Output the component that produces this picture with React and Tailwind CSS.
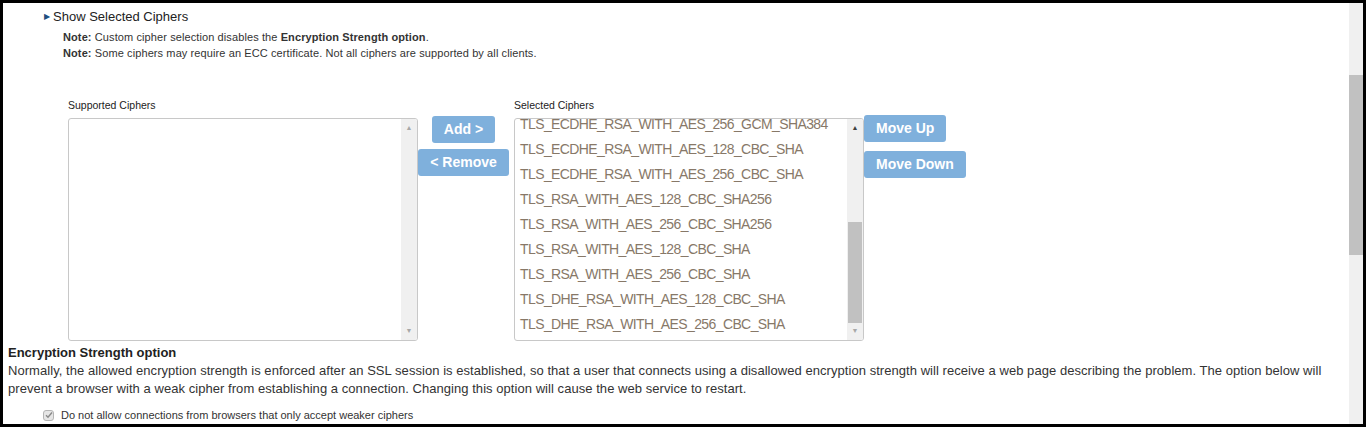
import { useState } from "react";

const selected = [
  "TLS_ECDHE_RSA_WITH_AES_256_GCM_SHA384",
  "TLS_ECDHE_RSA_WITH_AES_128_CBC_SHA",
  "TLS_ECDHE_RSA_WITH_AES_256_CBC_SHA",
  "TLS_RSA_WITH_AES_128_CBC_SHA256",
  "TLS_RSA_WITH_AES_256_CBC_SHA256",
  "TLS_RSA_WITH_AES_128_CBC_SHA",
  "TLS_RSA_WITH_AES_256_CBC_SHA",
  "TLS_DHE_RSA_WITH_AES_128_CBC_SHA",
  "TLS_DHE_RSA_WITH_AES_256_CBC_SHA",
];

function ListScrollbar({ thumb, upDark }) {
  return (
    <div className="w-[16px] bg-[#f0f0f0] flex flex-col items-center justify-between py-[5px] relative">
      <span className={`text-[7px] leading-[8px] ${upDark ? "text-[#404040]" : "text-[#a8a8a8]"}`}>▲</span>
      {thumb && (
        <div className="absolute left-[1px] right-[1px] top-[103px] h-[101px] bg-[#c1c1c1]" />
      )}
      <span className="text-[7px] leading-[8px] text-[#a8a8a8]">▼</span>
    </div>
  );
}

function Btn({ children }) {
  return (
    <button className="bg-[#7fb0dc] text-white text-[14px] font-bold leading-[27px] h-[27px] px-[12px] rounded-[3px] whitespace-nowrap">
      {children}
    </button>
  );
}

export default function App() {
  const [strict, setStrict] = useState(true);

  return (
    <div
      className="w-[1366px] h-[427px] border-[3px] border-black flex bg-white text-[#333] overflow-hidden"
      style={{ fontFamily: '"Liberation Sans", Arial, sans-serif' }}
    >
      <div className="flex-1 flex flex-col overflow-hidden">
        {/* Show Selected Ciphers */}
        <div className="flex items-center pl-[41px] pt-[6px] h-[22px] text-[13px] text-[#222]">
          <span className="text-[#1f4f7f] text-[8px] mr-[3px]">▶</span>
          Show Selected Ciphers
        </div>

        {/* Notes */}
        <div className="pl-[60px] mt-[4px] text-[11px] leading-[16px] tracking-[0.1px] text-[#333]">
          <div>
            <b>Note:</b> Custom cipher selection disables the <b>Encryption Strength option</b>.
          </div>
          <div>
            <b>Note:</b> Some ciphers may require an ECC certificate. Not all ciphers are supported by all clients.
          </div>
        </div>

        {/* Cipher lists */}
        <div className="flex items-start pl-[65px] mt-[37px]">
          <div className="flex flex-col">
            <div className="text-[10.5px] leading-[14px] h-[14px] text-[#222]">Supported Ciphers</div>
            <div className="mt-[6px] w-[350px] h-[223px] border border-[#c8c8c8] rounded-[3px] flex justify-end overflow-hidden">
              <ListScrollbar />
            </div>
          </div>

          <div className="w-[91px] mt-[18px] flex flex-col items-center gap-[6px]">
            <Btn>Add &gt;</Btn>
            <Btn>&lt; Remove</Btn>
          </div>

          <div className="flex flex-col ml-[5px]">
            <div className="text-[10.5px] leading-[14px] h-[14px] text-[#222]">Selected Ciphers</div>
            <div className="mt-[6px] w-[350px] h-[223px] border border-[#c8c8c8] rounded-[3px] flex overflow-hidden">
              <div className="flex-1 overflow-hidden">
                <div className="-mt-[7px] pl-[5px]">
                  {selected.map((c) => (
                    <div
                      key={c}
                      className="h-[25px] leading-[25px] text-[14px] tracking-[-0.6px] text-[#877868] whitespace-nowrap"
                    >
                      {c}
                    </div>
                  ))}
                </div>
              </div>
              <ListScrollbar thumb upDark />
            </div>
          </div>

          <div className="flex flex-col items-start gap-[9px] mt-[17px]">
            <Btn>Move Up</Btn>
            <Btn>Move Down</Btn>
          </div>
        </div>

        {/* Encryption Strength */}
        <div className="pl-[5px] mt-[3px] text-[13px] leading-[18px]">
          <div className="font-bold text-[#222]">Encryption Strength option</div>
          <p className="text-[#333] pr-[20px] tracking-[0.05px]">
            Normally, the allowed encryption strength is enforced after an SSL session is established, so that a user that connects using a disallowed encryption strength will receive a web page describing the problem. The option below will prevent a browser with a weak cipher from establishing a connection. Changing this option will cause the web service to restart.
          </p>
        </div>

        <label className="flex items-center pl-[40px] mt-[10px] text-[11px] leading-[14px] text-[#333]">
          <span
            onClick={() => setStrict(!strict)}
            className="w-[11px] h-[11px] rounded-[3px] border border-[#b5b5b5] bg-[#e6e6e6] flex items-center justify-center mr-[7px]"
          >
            {strict && (
              <svg width="8" height="8" viewBox="0 0 8 8">
                <path d="M1 4.2 L3 6.2 L7 1.5" fill="none" stroke="#8a8a8a" strokeWidth="1.4" />
              </svg>
            )}
          </span>
          Do not allow connections from browsers that only accept weaker ciphers
        </label>
      </div>

      {/* Page scrollbar */}
      <div className="w-[14px] bg-[#f0f0f0] pt-[72px]">
        <div className="h-[180px] bg-[#c1c1c1]" />
      </div>
    </div>
  );
}
